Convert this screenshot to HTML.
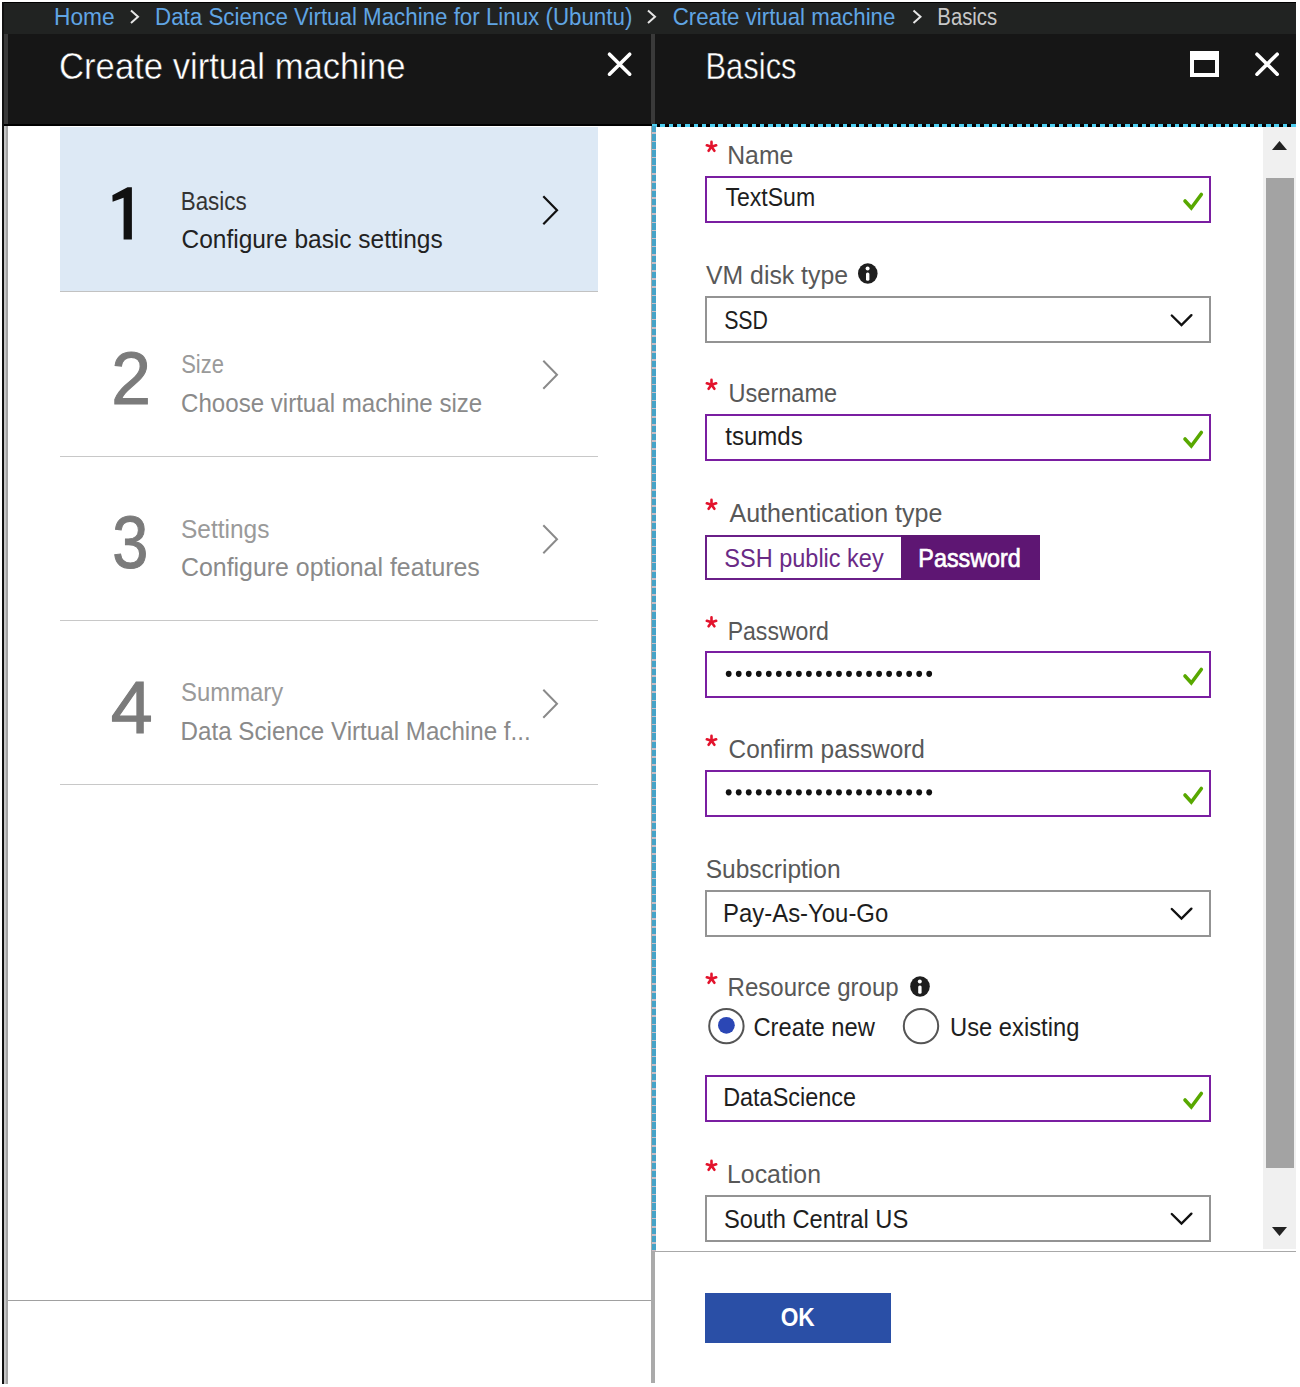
<!DOCTYPE html>
<html><head><meta charset="utf-8">
<style>
html,body{margin:0;padding:0;}
body{width:1300px;height:1387px;position:relative;overflow:hidden;background:#fff;font-family:"Liberation Sans",sans-serif;}
.a{position:absolute;}
.t{position:absolute;white-space:nowrap;line-height:1;transform-origin:0 0;}
svg{position:absolute;overflow:visible;}
</style></head><body>
<!-- frame -->
<div class="a" style="left:2px;top:2px;width:1294px;height:1px;background:#000"></div>
<div class="a" style="left:2px;top:3px;width:1294px;height:31px;background:#212322"></div>
<div class="a" style="left:2px;top:34px;width:1294px;height:90px;background:#161616"></div>
<div class="a" style="left:2px;top:124px;width:1294px;height:2px;background:#000"></div>
<!-- left border -->
<div class="a" style="left:2px;top:2px;width:2px;height:1382px;background:#111"></div>
<div class="a" style="left:4px;top:34px;width:4px;height:90px;background:#3a3a3a"></div>
<div class="a" style="left:4px;top:126px;width:2px;height:1258px;background:#c4c4c4"></div><div class="a" style="left:6px;top:126px;width:2px;height:1258px;background:#a6a6a6"></div>
<!-- divider -->
<div class="a" style="left:651px;top:34px;width:4px;height:90px;background:#3a3a3a"></div>
<div class="a" style="left:651px;top:126px;width:4px;height:1257px;background:#aaa"></div>
<!-- focus dashes -->
<div class="a" style="left:652px;top:124px;width:644px;height:3px;background:repeating-linear-gradient(90deg,#4ccdf0 0 4.5px,#000 4.5px 8.3px)"></div>
<div class="a" style="left:651.5px;top:126px;width:4px;height:1125px;background:repeating-linear-gradient(180deg,#45a3c8 0 6.5px,#c9bcc4 6.5px 8.1px)"></div>

<!-- left panel items -->
<div class="a" style="left:59.5px;top:126.5px;width:538.5px;height:164.5px;background:#dde9f5"></div>
<div class="a" style="left:59.5px;top:291px;width:538.5px;height:1px;background:#c2c2c2"></div>
<div class="a" style="left:59.5px;top:455.5px;width:538.5px;height:1px;background:#c8c8c8"></div>
<div class="a" style="left:59.5px;top:619.5px;width:538.5px;height:1px;background:#c8c8c8"></div>
<div class="a" style="left:59.5px;top:784px;width:538.5px;height:1px;background:#c8c8c8"></div>
<div class="a" style="left:8px;top:1300px;width:643px;height:1px;background:#a0a0a0"></div>

<!-- chevrons left -->
<svg style="left:0;top:0" width="1" height="1">
<polyline points="543.3,196.2 557,210.2 543.3,224.3" fill="none" stroke="#111" stroke-width="2.2"/>
<polyline points="543.3,360.7 557,374.7 543.3,388.8" fill="none" stroke="#8a8a8a" stroke-width="2"/>
<polyline points="543.3,525.2 557,539.2 543.3,553.3" fill="none" stroke="#8a8a8a" stroke-width="2"/>
<polyline points="543.3,689.7 557,703.7 543.3,717.8" fill="none" stroke="#8a8a8a" stroke-width="2"/>
<!-- breadcrumb chevrons -->
<polyline points="131,10.5 138,16.8 131,23" fill="none" stroke="#e6e6e6" stroke-width="2"/>
<polyline points="648,10.5 655,16.8 648,23" fill="none" stroke="#e6e6e6" stroke-width="2"/>
<polyline points="913.5,10.5 920.5,16.8 913.5,23" fill="none" stroke="#e6e6e6" stroke-width="2"/>
<!-- header close X left -->
<path d="M609.5,54.2 L629.7,74.2 M629.7,54.2 L609.5,74.2" stroke="#fff" stroke-width="3.6" stroke-linecap="round"/>
<!-- right close X -->
<path d="M1257,54.2 L1277.2,74.2 M1277.2,54.2 L1257,74.2" stroke="#fff" stroke-width="3.6" stroke-linecap="round"/>
</svg>
<!-- maximize -->
<div class="a" style="left:1190px;top:51px;width:29px;height:26px;box-sizing:border-box;border:4.5px solid #fff;border-top-width:9.5px"></div>

<!-- right panel scroll area -->
<div class="a" style="left:1262.5px;top:127px;width:33.5px;height:1122px;background:#f0f0f0"></div>
<div class="a" style="left:1265.5px;top:177.5px;width:28px;height:990.5px;background:#a3a3a3"></div>
<svg style="left:0;top:0" width="1" height="1">
<polygon points="1272,150 1287,150 1279.5,141" fill="#222"/>
<polygon points="1272,1227 1287,1227 1279.5,1236" fill="#222"/>
</svg>
<div class="a" style="left:655px;top:1251px;width:641px;height:1px;background:#a8a8a8"></div>

<!-- form controls -->
<div class="a" style="left:705px;top:176px;width:506px;height:47px;box-sizing:border-box;border:2px solid #7a1ea1"></div>
<div class="a" style="left:705px;top:296px;width:506px;height:47px;box-sizing:border-box;border:2px solid #939393"></div>
<div class="a" style="left:705px;top:414px;width:506px;height:47px;box-sizing:border-box;border:2px solid #7a1ea1"></div>
<div class="a" style="left:705px;top:534.5px;width:335px;height:45.5px;box-sizing:border-box;border:2px solid #6a1f88;border-right:none"></div>
<div class="a" style="left:900.5px;top:534.5px;width:139.7px;height:45.5px;background:#5e1673"></div>
<div class="a" style="left:705px;top:651px;width:506px;height:47px;box-sizing:border-box;border:2px solid #7a1ea1"></div>
<div class="a" style="left:705px;top:769.5px;width:506px;height:47px;box-sizing:border-box;border:2px solid #7a1ea1"></div>
<div class="a" style="left:705px;top:889.5px;width:506px;height:47px;box-sizing:border-box;border:2px solid #939393"></div>
<div class="a" style="left:705px;top:1075px;width:506px;height:47px;box-sizing:border-box;border:2px solid #7a1ea1"></div>
<div class="a" style="left:705px;top:1195px;width:506px;height:47px;box-sizing:border-box;border:2px solid #939393"></div>
<!-- OK button -->
<div class="a" style="left:705px;top:1293px;width:186px;height:49.5px;background:#2a4fa6"></div>

<svg style="left:0;top:0" width="1" height="1">
<!-- asterisks -->
<path d="M711.50,146.80L711.50,141.90M711.50,146.80L716.16,145.29M711.50,146.80L714.38,150.76M711.50,146.80L708.62,150.76M711.50,146.80L706.84,145.29M711.50,384.80L711.50,379.90M711.50,384.80L716.16,383.29M711.50,384.80L714.38,388.76M711.50,384.80L708.62,388.76M711.50,384.80L706.84,383.29M711.50,504.80L711.50,499.90M711.50,504.80L716.16,503.29M711.50,504.80L714.38,508.76M711.50,504.80L708.62,508.76M711.50,504.80L706.84,503.29M711.50,622.30L711.50,617.40M711.50,622.30L716.16,620.79M711.50,622.30L714.38,626.26M711.50,622.30L708.62,626.26M711.50,622.30L706.84,620.79M711.50,740.80L711.50,735.90M711.50,740.80L716.16,739.29M711.50,740.80L714.38,744.76M711.50,740.80L708.62,744.76M711.50,740.80L706.84,739.29M711.50,978.80L711.50,973.90M711.50,978.80L716.16,977.29M711.50,978.80L714.38,982.76M711.50,978.80L708.62,982.76M711.50,978.80L706.84,977.29M711.50,1165.80L711.50,1160.90M711.50,1165.80L716.16,1164.29M711.50,1165.80L714.38,1169.76M711.50,1165.80L708.62,1169.76M711.50,1165.80L706.84,1164.29" stroke="#e3132c" stroke-width="2.6" stroke-linecap="round" fill="none"/>
<!-- checkmarks -->
<g fill="none" stroke="#58a800" stroke-width="3.6" stroke-linecap="round" stroke-linejoin="miter">
<polyline points="1185,201 1191.3,208 1201.3,194.5"/>
<polyline points="1185,439 1191.3,446 1201.3,432.5"/>
<polyline points="1185,676 1191.3,683 1201.3,669.5"/>
<polyline points="1185,795 1191.3,802 1201.3,788.5"/>
<polyline points="1185,1100 1191.3,1107 1201.3,1093.5"/>
</g>
<!-- select chevrons -->
<g fill="none" stroke="#111" stroke-width="2.4" stroke-linecap="round">
<polyline points="1171.8,315.5 1181.5,325 1191.4,315.2"/>
<polyline points="1171.8,909 1181.5,918.5 1191.4,908.7"/>
<polyline points="1171.8,1214 1181.5,1223.5 1191.4,1213.7"/>
</g>
<!-- info icons -->
<g>
<ellipse cx="867.8" cy="273.5" rx="9.8" ry="10.3" fill="#1e1e1e"/>
<circle cx="867.6" cy="268.4" r="2" fill="#fff"/>
<rect x="866" y="272.5" width="3.4" height="8.2" rx="1.5" fill="#fff"/>
<ellipse cx="920" cy="986.5" rx="9.8" ry="10.3" fill="#1e1e1e"/>
<circle cx="919.8" cy="981.4" r="2" fill="#fff"/>
<rect x="918.2" y="985.5" width="3.4" height="8.2" rx="1.5" fill="#fff"/>
</g>
<path d="M131.9,187.2 L131.9,239.6 L123.6,239.6 L123.6,197.8 L112.6,201.8 L112.4,195.2 L127.5,187.2 Z" fill="#111"/>
<!-- radios -->
<circle cx="726.4" cy="1026.1" r="17.2" fill="none" stroke="#555" stroke-width="2"/>
<circle cx="726.4" cy="1025.3" r="8.4" fill="#2b47b5"/>
<circle cx="921" cy="1026.1" r="17.2" fill="none" stroke="#555" stroke-width="2"/>
<!-- password dots -->
<g fill="#111" id="dots"><ellipse cx="728.70" cy="673.8" rx="2.9" ry="3.1"/><ellipse cx="738.73" cy="673.8" rx="2.9" ry="3.1"/><ellipse cx="748.75" cy="673.8" rx="2.9" ry="3.1"/><ellipse cx="758.78" cy="673.8" rx="2.9" ry="3.1"/><ellipse cx="768.80" cy="673.8" rx="2.9" ry="3.1"/><ellipse cx="778.83" cy="673.8" rx="2.9" ry="3.1"/><ellipse cx="788.85" cy="673.8" rx="2.9" ry="3.1"/><ellipse cx="798.88" cy="673.8" rx="2.9" ry="3.1"/><ellipse cx="808.90" cy="673.8" rx="2.9" ry="3.1"/><ellipse cx="818.93" cy="673.8" rx="2.9" ry="3.1"/><ellipse cx="828.95" cy="673.8" rx="2.9" ry="3.1"/><ellipse cx="838.98" cy="673.8" rx="2.9" ry="3.1"/><ellipse cx="849.00" cy="673.8" rx="2.9" ry="3.1"/><ellipse cx="859.03" cy="673.8" rx="2.9" ry="3.1"/><ellipse cx="869.05" cy="673.8" rx="2.9" ry="3.1"/><ellipse cx="879.08" cy="673.8" rx="2.9" ry="3.1"/><ellipse cx="889.10" cy="673.8" rx="2.9" ry="3.1"/><ellipse cx="899.12" cy="673.8" rx="2.9" ry="3.1"/><ellipse cx="909.15" cy="673.8" rx="2.9" ry="3.1"/><ellipse cx="919.18" cy="673.8" rx="2.9" ry="3.1"/><ellipse cx="929.20" cy="673.8" rx="2.9" ry="3.1"/><ellipse cx="728.70" cy="792.3" rx="2.9" ry="3.1"/><ellipse cx="738.73" cy="792.3" rx="2.9" ry="3.1"/><ellipse cx="748.75" cy="792.3" rx="2.9" ry="3.1"/><ellipse cx="758.78" cy="792.3" rx="2.9" ry="3.1"/><ellipse cx="768.80" cy="792.3" rx="2.9" ry="3.1"/><ellipse cx="778.83" cy="792.3" rx="2.9" ry="3.1"/><ellipse cx="788.85" cy="792.3" rx="2.9" ry="3.1"/><ellipse cx="798.88" cy="792.3" rx="2.9" ry="3.1"/><ellipse cx="808.90" cy="792.3" rx="2.9" ry="3.1"/><ellipse cx="818.93" cy="792.3" rx="2.9" ry="3.1"/><ellipse cx="828.95" cy="792.3" rx="2.9" ry="3.1"/><ellipse cx="838.98" cy="792.3" rx="2.9" ry="3.1"/><ellipse cx="849.00" cy="792.3" rx="2.9" ry="3.1"/><ellipse cx="859.03" cy="792.3" rx="2.9" ry="3.1"/><ellipse cx="869.05" cy="792.3" rx="2.9" ry="3.1"/><ellipse cx="879.08" cy="792.3" rx="2.9" ry="3.1"/><ellipse cx="889.10" cy="792.3" rx="2.9" ry="3.1"/><ellipse cx="899.12" cy="792.3" rx="2.9" ry="3.1"/><ellipse cx="909.15" cy="792.3" rx="2.9" ry="3.1"/><ellipse cx="919.18" cy="792.3" rx="2.9" ry="3.1"/><ellipse cx="929.20" cy="792.3" rx="2.9" ry="3.1"/></g>
</svg>

<svg width="1300" height="1387" style="left:0;top:0" font-family="Liberation Sans"><text transform="translate(54.03,25) scale(0.9673,1)" font-size="23.5" fill="#60a5e4">Home</text>
<text transform="translate(155.05,25) scale(0.9508,1)" font-size="23.5" fill="#60a5e4">Data Science Virtual Machine for Linux (Ubuntu)</text>
<text transform="translate(672.65,25) scale(0.9482,1)" font-size="23.5" fill="#60a5e4">Create virtual machine</text>
<text transform="translate(937.34,25) scale(0.8642,1)" font-size="23.5" fill="#c8c8c8">Basics</text>
<text transform="translate(59.07,79) scale(0.9289,1)" font-size="37.3" fill="#ffffff" stroke="#161616" stroke-width="0.45">Create virtual machine</text>
<text transform="translate(705.51,79) scale(0.8286,1)" font-size="37.3" fill="#ffffff" stroke="#161616" stroke-width="0.45">Basics</text>
<text transform="translate(180.74,210) scale(0.8776,1)" font-size="25.5" fill="#333333">Basics</text>
<text transform="translate(181.54,248) scale(0.9597,1)" font-size="25.5" fill="#222222">Configure basic settings</text>
<text transform="translate(111.15,404) scale(0.9514,1)" font-size="75" fill="#7b7b7b" stroke="#7b7b7b" stroke-width="1.1">2</text>
<text transform="translate(181.14,373) scale(0.8612,1)" font-size="25.5" fill="#9a9a9a">Size</text>
<text transform="translate(181.06,412) scale(0.9449,1)" font-size="25.5" fill="#8a8a8a">Choose virtual machine size</text>
<text transform="translate(112.27,568) scale(0.8649,1)" font-size="75" fill="#7b7b7b" stroke="#7b7b7b" stroke-width="1.1">3</text>
<text transform="translate(181.04,538) scale(0.9603,1)" font-size="25.5" fill="#9a9a9a">Settings</text>
<text transform="translate(181.02,576) scale(0.9762,1)" font-size="25.5" fill="#8a8a8a">Configure optional features</text>
<text transform="translate(110.79,733) scale(1.0051,1)" font-size="75" fill="#7b7b7b" stroke="#7b7b7b" stroke-width="1.1">4</text>
<text transform="translate(181.06,701) scale(0.9368,1)" font-size="25.5" fill="#9a9a9a">Summary</text>
<text transform="translate(180.60,740) scale(0.9483,1)" font-size="25.5" fill="#8a8a8a">Data Science Virtual Machine f...</text>
<text transform="translate(727.23,164) scale(0.9832,1)" font-size="25.2" fill="#585858">Name</text>
<text transform="translate(725.40,206) scale(0.9155,1)" font-size="25.2" fill="#1e1e1e">TextSum</text>
<text transform="translate(706.00,284) scale(0.9849,1)" font-size="25.2" fill="#585858">VM disk type</text>
<text transform="translate(724.15,329) scale(0.8468,1)" font-size="25.2" fill="#1e1e1e">SSD</text>
<text transform="translate(728.57,402) scale(0.9345,1)" font-size="25.2" fill="#585858">Username</text>
<text transform="translate(725.30,445) scale(0.9542,1)" font-size="25.2" fill="#1e1e1e">tsumds</text>
<text transform="translate(729.50,522) scale(0.9933,1)" font-size="25.2" fill="#585858">Authentication type</text>
<text transform="translate(724.37,567) scale(0.9325,1)" font-size="25.2" fill="#6a2a86">SSH public key</text>
<text transform="translate(918.37,567) scale(0.9156,1)" font-size="25.5" fill="#ffffff" stroke="#ffffff" stroke-width="0.7">Password</text>
<text transform="translate(727.67,640) scale(0.9156,1)" font-size="25.2" fill="#585858">Password</text>
<text transform="translate(728.53,758) scale(0.9674,1)" font-size="25.2" fill="#585858">Confirm password</text>
<text transform="translate(705.63,878) scale(0.9737,1)" font-size="25.2" fill="#585858">Subscription</text>
<text transform="translate(723.10,922) scale(0.9488,1)" font-size="25.2" fill="#1e1e1e">Pay-As-You-Go</text>
<text transform="translate(727.59,996) scale(0.9546,1)" font-size="25.2" fill="#585858">Resource group</text>
<text transform="translate(753.46,1036) scale(0.9431,1)" font-size="25.2" fill="#1e1e1e">Create new</text>
<text transform="translate(950.06,1036) scale(0.9424,1)" font-size="25.2" fill="#1e1e1e">Use existing</text>
<text transform="translate(723.14,1106) scale(0.9299,1)" font-size="25.2" fill="#1e1e1e">DataScience</text>
<text transform="translate(727.03,1183) scale(0.9868,1)" font-size="25.2" fill="#585858">Location</text>
<text transform="translate(724.06,1228) scale(0.9397,1)" font-size="25.2" fill="#1e1e1e">South Central US</text>
<text transform="translate(780.64,1326) scale(0.8572,1)" font-size="26.5" fill="#ffffff" font-weight="bold">OK</text></svg>
</body></html>
